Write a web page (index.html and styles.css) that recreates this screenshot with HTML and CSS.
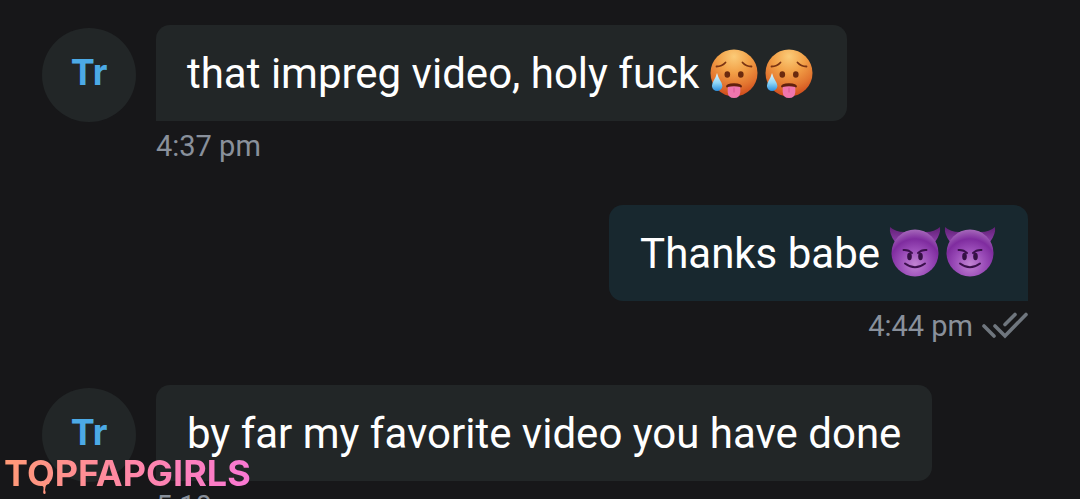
FILE: index.html
```html
<!DOCTYPE html>
<html lang="en">
<head>
	<meta charset="UTF-8">
	<meta name="viewport" content="width=device-width, initial-scale=1">
	<title>Chat</title>
	<link rel="stylesheet" href="styles.css">
</head>
<body>
<!-- shared emoji and icons -->
<svg class="defs" width="0" height="0" aria-hidden="true">
	<defs>
		<radialGradient id="hot" cx="50%" cy="15%" r="85%">
			<stop offset="0" stop-color="#fbcb78"/>
			<stop offset="0.4" stop-color="#f2a047"/>
			<stop offset="0.75" stop-color="#e2742f"/>
			<stop offset="1" stop-color="#cf4a1c"/>
		</radialGradient>
		<linearGradient id="drop" x1="0" y1="0" x2="0" y2="1">
			<stop offset="0" stop-color="#e4f8ff"/>
			<stop offset="0.55" stop-color="#8ed5f6"/>
			<stop offset="1" stop-color="#2b8fdc"/>
		</linearGradient>
		<radialGradient id="purple" cx="50%" cy="74%" r="72%">
			<stop offset="0" stop-color="#c183d2"/>
			<stop offset="0.45" stop-color="#9a4cb8"/>
			<stop offset="0.75" stop-color="#7f2c9f"/>
			<stop offset="1" stop-color="#a263b8"/>
		</radialGradient>
		<linearGradient id="horn" x1="0" y1="0" x2="0" y2="1">
			<stop offset="0" stop-color="#5f2074"/>
			<stop offset="1" stop-color="#8d3daa"/>
		</linearGradient>
	</defs>
	<symbol id="hot-face" viewBox="0 0 55 56">
		<circle cx="28" cy="28" r="23.500" fill="url(#hot)"/>
		<path d="M10.500 21.500Q16 21.500 19.500 17.500M36.500 17.500Q40 21.500 45.500 21.500" fill="none" stroke="#7b3413" stroke-width="1.800" stroke-linecap="round"/>
		<ellipse cx="21.300" cy="29.500" rx="2.800" ry="3.300" fill="#6b2a0e"/>
		<ellipse cx="34.800" cy="29.500" rx="2.800" ry="3.300" fill="#6b2a0e"/>
		<path d="M20 42Q20 38.300 28 38.300T36 42Q35 43 28 42.300Q21 43 20 42Z" fill="#61200d"/>
		<path d="M21.700 42Q28 40.700 34.300 42V47Q34 53 28 53T21.700 47Z" fill="#ef76ae"/>
		<path d="M28 43V47" stroke="#dc5c97" stroke-width="1.200" stroke-linecap="round"/>
		<path d="M11 28Q12 32 14.500 36Q18 41 14.800 44.500Q11 47.500 7.400 44.500Q4.500 41 7.500 36Q10 32 11 28Z" fill="url(#drop)"/>
	</symbol>
	<symbol id="devil-face" viewBox="0 0 55 56">
		<path d="M3 2Q9 7.500 19 7L8 17Q2 9 3 2ZM53 2Q47 7.500 37 7L48 17Q54 9 53 2Z" fill="url(#horn)"/>
		<circle cx="28" cy="28" r="23.500" fill="url(#purple)"/>
		<path d="M16.500 25Q21.500 24.500 25 28M39.500 25Q34.500 24.500 31 28" fill="none" stroke="#3b104c" stroke-width="1.900" stroke-linecap="round"/>
		<ellipse cx="22.500" cy="31.500" rx="2.300" ry="3.800" fill="#351044"/>
		<ellipse cx="33.500" cy="31.500" rx="2.300" ry="3.800" fill="#351044"/>
		<path d="M18 38.500Q28 46 38 38.500" fill="none" stroke="#3b104c" stroke-width="2" stroke-linecap="round"/>
	</symbol>
</svg>

<main class="chat">
	<article class="message">
		<div class="avatar">Tr</div>
		<div class="content">
			<div class="bubble">
				<p>that impreg video, holy fuck</p>
				<span class="emojis">
					<svg role="img" aria-label="hot face"><use href="#hot-face"/></svg>
					<svg role="img" aria-label="hot face"><use href="#hot-face"/></svg>
				</span>
			</div>
			<div class="meta"><time>4:37 pm</time></div>
		</div>
	</article>

	<article class="message sent">
		<div class="content">
			<div class="bubble">
				<p>Thanks babe</p>
				<span class="emojis">
					<svg role="img" aria-label="smiling devil"><use href="#devil-face"/></svg>
					<svg role="img" aria-label="smiling devil"><use href="#devil-face"/></svg>
				</span>
			</div>
			<div class="meta">
				<time>4:44 pm</time>
				<svg class="ticks" viewBox="0 0 46 28" role="img" aria-label="read">
					<path d="M2 14L12 24M13 14L23 24L44 2.500M23 12.500L33 2.500" fill="none" stroke="#6f767e" stroke-width="3.600" stroke-linecap="round"/>
				</svg>
			</div>
		</div>
	</article>

	<article class="message">
		<div class="avatar">Tr</div>
		<div class="content">
			<div class="bubble"><p>by far my favorite video you have done</p></div>
			<div class="meta"><time>5:10 pm</time></div>
		</div>
	</article>
</main>

<div class="watermark">
	<span>TOPFAPGIRLS</span>
	<svg class="drip" viewBox="0 0 12 14" aria-hidden="true">
		<path d="M0 1Q6 4 12 0L11 3Q8 3 7.500 6L7 9Q8.500 13 6.500 13T5.500 9V6Q4 4 2 4Z" fill="#ff9680"/>
	</svg>
</div>
</body>
</html>
```

FILE: styles.css
```css
*{
	margin: 0;
	padding: 0;
	box-sizing: border-box;
}
html,body{
	height: 100%;
}
body{
	position: relative;
	overflow: hidden;
	background: #171719;
	color: #fff;
	font-family: Roboto, "Liberation Sans", sans-serif;
}
.defs{
	position: absolute;
}
.chat{
	display: flex;
	flex-direction: column;
	gap: 34px;
	padding: 25px 52px 0 42px;
}
.message{
	display: flex;
	align-items: flex-start;
	gap: 20px;
}
.message.sent{
	justify-content: flex-end;
}
.avatar{
	flex: none;
	width: 94px;
	height: 94px;
	margin-top: 3px;
	border-radius: 50%;
	background: #222627;
	color: #4caae6;
	font-family: Inter, sans-serif;
	font-size: 36px;
	font-weight: 700;
	line-height: 88px;
	text-align: center;
}
.content{
	display: flex;
	flex-direction: column;
	align-items: flex-start;
}
.sent .content{
	align-items: flex-end;
}
.bubble{
	display: flex;
	align-items: center;
	gap: 7px;
	min-height: 96px;
	padding: 19px 31px;
	border-radius: 14px 14px 14px 0;
	background: #222627;
	font-size: 42px;
	line-height: 56px;
}
.bubble p{
	padding-top: 2px;
}
.sent .bubble{
	border-radius: 14px 14px 0 14px;
	background: #18282f;
}
.emojis{
	display: flex;
}
.emojis svg{
	width: 55px;
	height: 56px;
}
.meta{
	display: flex;
	align-items: center;
	gap: 9px;
	height: 50px;
	color: #89909b;
	font-size: 29px;
	line-height: 50px;
}
.ticks{
	width: 46px;
	height: 28px;
}

/* site mark over the bottom corner */
.watermark{
	position: absolute;
	left: 4px;
	bottom: 4px;
	font-family: Inter, sans-serif;
	font-size: 36px;
	font-weight: 700;
	line-height: 44px;
}
.watermark span{
	background: linear-gradient(90deg, #ff9a76, #ff87a6 50%, #fa78d4);
	-webkit-background-clip: text;
	background-clip: text;
	color: transparent;
}
.drip{
	position: absolute;
	left: 34px;
	bottom: 0;
	width: 12px;
	height: 14px;
}
```
